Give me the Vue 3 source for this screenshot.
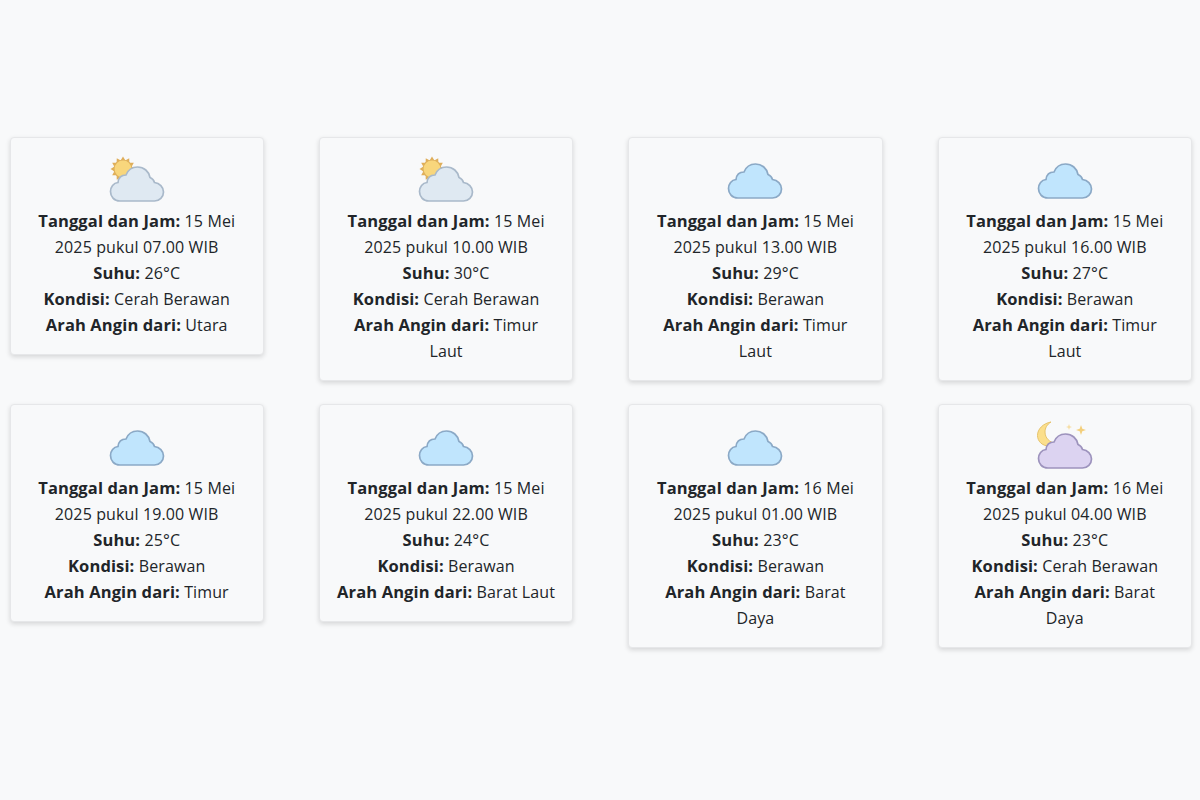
<script setup>
const cards = [
  { icon: 'sun', date: '15 Mei 2025 pukul 07.00 WIB', temp: '26°C', cond: 'Cerah Berawan', wind: 'Utara' },
  { icon: 'sun', date: '15 Mei 2025 pukul 10.00 WIB', temp: '30°C', cond: 'Cerah Berawan', wind: 'Timur Laut' },
  { icon: 'cloud', date: '15 Mei 2025 pukul 13.00 WIB', temp: '29°C', cond: 'Berawan', wind: 'Timur Laut' },
  { icon: 'cloud', date: '15 Mei 2025 pukul 16.00 WIB', temp: '27°C', cond: 'Berawan', wind: 'Timur Laut' },
  { icon: 'cloud', date: '15 Mei 2025 pukul 19.00 WIB', temp: '25°C', cond: 'Berawan', wind: 'Timur' },
  { icon: 'cloud', date: '15 Mei 2025 pukul 22.00 WIB', temp: '24°C', cond: 'Berawan', wind: 'Barat Laut' },
  { icon: 'cloud', date: '16 Mei 2025 pukul 01.00 WIB', temp: '23°C', cond: 'Berawan', wind: 'Barat Daya' },
  { icon: 'moon', date: '16 Mei 2025 pukul 04.00 WIB', temp: '23°C', cond: 'Cerah Berawan', wind: 'Barat Daya' },
]
const cloudPath = 'M12 46 C6 46 2.500 41.500 2.500 36.500 C2.500 32 5.500 28 10 27.500 C10.500 23 13.500 20 18 20 C20 15 24.500 12 29.500 12 C36 12 41 16.500 42 22.500 C44.500 23.500 46 25.500 46.500 27.500 C51.500 28 55.500 32 55.500 37 C55.500 42 51.500 46 46.500 46 Z'
const rays = Array.from({ length: 12 }, (_, i) => i * 30)
</script>

<template>
  <main class="page">
    <article v-for="(c, i) in cards" :key="i" class="card">
      <svg class="icon" viewBox="0 0 58 56.500" width="58" height="56.500" aria-hidden="true">
        <g v-if="c.icon === 'sun'">
          <g transform="translate(15 17)">
            <polygon
              v-for="r in rays"
              :key="r"
              points="-2.400,-8.500 0,-12.500 2.400,-8.500"
              fill="#dfae5a"
              :transform="`rotate(${r})`"
            />
            <circle r="9" fill="#f8d67c" stroke="#e0b25c" stroke-width="1.200" />
          </g>
          <path :d="cloudPath" transform="translate(0 3)" fill="#dfe9f2" stroke="#a9b9ca" stroke-width="1.700" />
        </g>
        <g v-else-if="c.icon === 'cloud'">
          <path :d="cloudPath" fill="#c0e5fd" stroke="#8ba9c6" stroke-width="1.700" />
        </g>
        <g v-else>
          <path d="M15 3 C7 4.500 1.500 10 1.500 16.500 C1.500 22 6 27 13 27 C16 27 18.500 26 20 24.500 C13.500 23.500 9 19 9 13 C9 9 11 5.500 15 3 Z" fill="#fbdf8c" stroke="#e6c36c" stroke-width="1" />
          <path d="M45 6 L46.300 9.700 L50 11 L46.300 12.300 L45 16 L43.700 12.300 L40 11 L43.700 9.700 Z" fill="#f3cf7c" />
          <path d="M33 5 L33.800 7.200 L36 8 L33.800 8.800 L33 11 L32.200 8.800 L30 8 L32.200 7.200 Z" fill="#f6dda2" />
          <path :d="cloudPath" transform="translate(0 3)" fill="#dcd3f1" stroke="#9d93bd" stroke-width="1.700" />
        </g>
      </svg>
      <p class="line"><strong>Tanggal dan Jam:</strong> {{ c.date }}</p>
      <p class="line"><strong>Suhu:</strong> {{ c.temp }}</p>
      <p class="line"><strong>Kondisi:</strong> {{ c.cond }}</p>
      <p class="line"><strong>Arah Angin dari:</strong> {{ c.wind }}</p>
    </article>
  </main>
</template>

<style>
html, body { margin: 0; background: #f8f9fa; }
</style>

<style scoped>
.page {
  box-sizing: border-box;
  width: 1200px;
  height: 800px;
  padding: 136.700px 8px 0 9.500px;
  display: grid;
  grid-template-columns: repeat(4, 1fr);
  column-gap: 55px;
  row-gap: 22.500px;
  align-items: start;
  align-content: start;
  background: #f8f9fa;
  font-family: "Open Sans", "Noto Sans", sans-serif;
  font-size: 16px;
  letter-spacing: 0.120px;
  line-height: 26px;
  color: #212529;
}
.card {
  box-sizing: border-box;
  padding: 14px 16.500px 16px;
  border: 1px solid #e6e7e9;
  border-radius: 4px;
  background: #f8f9fa;
  box-shadow: 0 2px 5px rgba(0, 0, 0, 0.14);
  text-align: center;
}
.icon {
  display: block;
  margin: 0 auto;
}
.line {
  margin: 0;
}
strong {
  font-weight: 700;
  font-size: 16.500px;
}
</style>
